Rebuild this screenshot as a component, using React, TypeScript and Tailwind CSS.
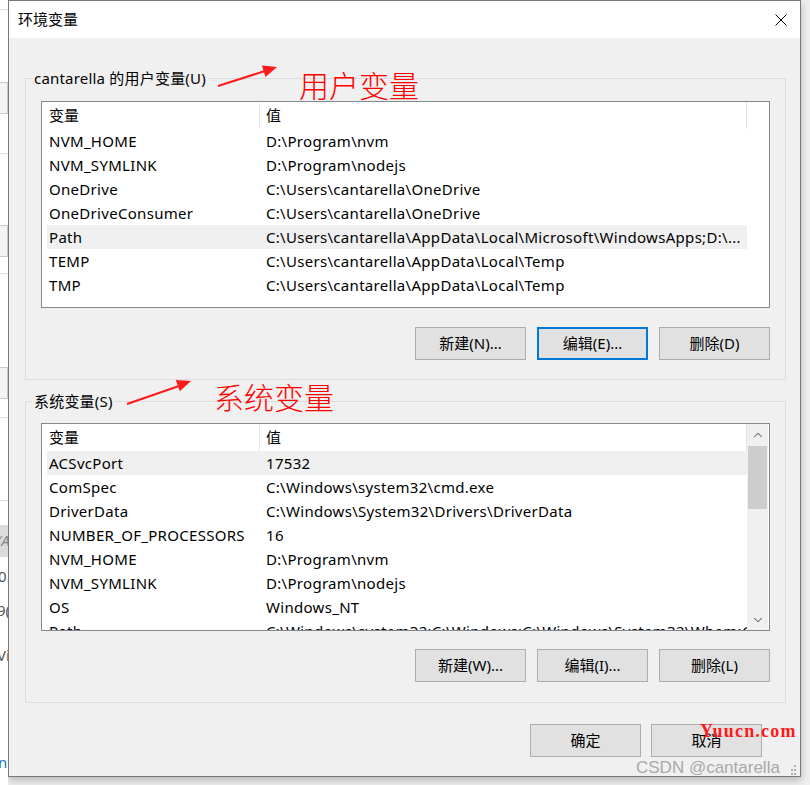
import { ChevronDown, ChevronUp } from 'lucide-react';

type Row = [string, string];

const userVars: Row[] = [
  ['NVM_HOME', 'D:\\Program\\nvm'],
  ['NVM_SYMLINK', 'D:\\Program\\nodejs'],
  ['OneDrive', 'C:\\Users\\cantarella\\OneDrive'],
  ['OneDriveConsumer', 'C:\\Users\\cantarella\\OneDrive'],
  ['Path', 'C:\\Users\\cantarella\\AppData\\Local\\Microsoft\\WindowsApps;D:\\...'],
  ['TEMP', 'C:\\Users\\cantarella\\AppData\\Local\\Temp'],
  ['TMP', 'C:\\Users\\cantarella\\AppData\\Local\\Temp'],
];

const sysVars: Row[] = [
  ['ACSvcPort', '17532'],
  ['ComSpec', 'C:\\Windows\\system32\\cmd.exe'],
  ['DriverData', 'C:\\Windows\\System32\\Drivers\\DriverData'],
  ['NUMBER_OF_PROCESSORS', '16'],
  ['NVM_HOME', 'D:\\Program\\nvm'],
  ['NVM_SYMLINK', 'D:\\Program\\nodejs'],
  ['OS', 'Windows_NT'],
  ['Path', 'C:\\Windows\\system32;C:\\Windows;C:\\Windows\\System32\\Wbem;C:\\Windows\\...'],
];

function VarList({
  rows,
  selected,
  scroll,
  height,
}: {
  rows: Row[];
  selected: number;
  scroll?: boolean;
  height: string;
}) {
  return (
    <div className={`ml-[15px] w-[729px] ${height} border border-[#828790] bg-white flex overflow-hidden`}>
      <div className="pl-[5px] w-[705px] overflow-hidden">
        {/* 헤더 */}
        <div className="h-[27px] w-[700px] flex items-center border-r border-[#e5e5e5]">
          <div className="w-[213px] h-[26px] pl-[2px] flex items-center border-r border-[#e5e5e5]">变量</div>
          <div className="pl-[6px]">值</div>
        </div>
        {rows.map(([name, value], i) => (
          <div
            key={name + i}
            className={`h-[24px] w-[700px] flex items-center tracking-[0.3px] ${i === selected ? 'bg-[#f0f0f0]' : ''}`}
          >
            <div className="w-[219px] pl-[2px] whitespace-nowrap">{name}</div>
            <div className="flex-1 whitespace-nowrap overflow-hidden">{value}</div>
          </div>
        ))}
      </div>
      {scroll && (
        <div className="w-[21px] h-full bg-[#f0f0f0] flex flex-col items-center">
          <div className="h-[21px] w-full flex items-center justify-center text-[#606060]">
            <ChevronUp className="w-[14px] h-[14px]" strokeWidth={1.75} />
          </div>
          <div className="mt-[1px] w-[19px] h-[63px] bg-[#cdcdcd]" />
          <div className="flex-1" />
          <div className="h-[21px] w-full flex items-center justify-center text-[#606060]">
            <ChevronDown className="w-[14px] h-[14px]" strokeWidth={1.75} />
          </div>
        </div>
      )}
    </div>
  );
}

function Btn({ label, focused }: { label: string; focused?: boolean }) {
  return (
    <div
      className={`w-[111px] h-[33px] flex items-center justify-center bg-[#e1e1e1] ${
        focused ? 'border-2 border-[#0078d7]' : 'border border-[#adadad]'
      }`}
    >
      {label}
    </div>
  );
}

function Group({ title, children, gap }: { title: string; children: React.ReactNode; gap: string }) {
  return (
    <fieldset className="ml-[16px] w-[761px] h-[312px] border border-[#dcdcdc]">
      <legend className="ml-[6px] px-[2px] leading-[20px] tracking-[0.2px]">{title}</legend>
      <div className={gap}>{children}</div>
    </fieldset>
  );
}

function LeftStrip() {
  // 뒤 창의 일부
  return (
    <div className="relative w-[8px] h-[785px] bg-white overflow-hidden shrink-0 text-[15px] text-[#555]">
      <div className="absolute left-0 top-[9px] w-full border-t border-[#e0e0e0]" />
      <div className="absolute left-[-4px] top-[82px] w-[12px] h-[32px] border border-[#c8c8c8] bg-[#f4f4f4]" />
      <div className="absolute left-0 top-[153px] w-full border-t border-[#e0e0e0]" />
      <div className="absolute left-[-4px] top-[225px] w-[12px] h-[32px] border border-[#c8c8c8] bg-[#f4f4f4]" />
      <div className="absolute left-0 top-[273px] w-full border-t border-[#e0e0e0]" />
      <div className="absolute left-[-4px] top-[367px] w-[12px] h-[32px] border border-[#c8c8c8] bg-[#f4f4f4]" />
      <div className="absolute left-0 top-[417px] w-full border-t border-[#e0e0e0]" />
      <div className="absolute left-0 top-[500px] w-full border-t border-[#d8d8d8]" />
      <div className="absolute left-0 top-[525px] w-full h-[32px] bg-[#dcdcdc]" />
      <div className="absolute left-[-3px] top-[530px] italic leading-[20px] text-[#888]">(A</div>
      <div className="absolute left-[-2px] top-[566px] leading-[20px]">0</div>
      <div className="absolute left-[-3px] top-[600px] leading-[20px]">9(</div>
      <div className="absolute left-[-3px] top-[645px] leading-[20px]">Vi</div>
      <div className="absolute left-[-2px] top-[752px] leading-[20px] text-[#1a73c8]">n</div>
    </div>
  );
}

export default function App() {
  return (
    <div className="relative w-[810px] h-[785px] overflow-hidden bg-[#efefef] flex items-start font-['Noto_Sans','Noto_Sans_CJK_SC',sans-serif] text-[15px] text-black">
      <LeftStrip />

      <div className="w-[793px] h-[777px] border border-[#787878] bg-[#f0f0f0] flex flex-col shadow-[0_3px_8px_rgba(0,0,0,0.25)]">
        {/* 타이틀바 */}
        <div className="h-[37px] bg-white flex items-center justify-between pl-[9px] pr-[13px]">
          <span>环境变量</span>
          <svg width="12" height="12" viewBox="0 0 12 12">
            <path d="M0.5 0.5 L11.5 11.5 M11.5 0.5 L0.5 11.5" stroke="#000" strokeWidth="1" />
          </svg>
        </div>

        <div className="mt-[30px]">
          <Group title="cantarella 的用户变量(U)" gap="mt-[13px]">
            <VarList rows={userVars} selected={4} height="h-[207px]" />
            <div className="ml-[15px] w-[729px] mt-[19px] flex justify-end gap-[11px]">
              <Btn label="新建(N)..." />
              <Btn label="编辑(E)..." focused />
              <Btn label="删除(D)" />
            </div>
          </Group>
        </div>

        <div className="mt-[11px]">
          <Group title="系统变量(S)" gap="mt-[12px]">
            <VarList rows={sysVars} selected={0} scroll height="h-[208px]" />
            <div className="ml-[15px] w-[729px] mt-[18px] flex justify-end gap-[11px]">
              <Btn label="新建(W)..." />
              <Btn label="编辑(I)..." />
              <Btn label="删除(L)" />
            </div>
          </Group>
        </div>

        <div className="mt-[21px] pr-[38px] flex justify-end gap-[10px]">
          <Btn label="确定" />
          <Btn label="取消" />
        </div>
      </div>

      {/* 빨간 주석 */}
      <svg className="absolute inset-0 pointer-events-none" width="810" height="785">
        <line x1="218" y1="86" x2="265" y2="71" stroke="#ff1a1a" strokeWidth="2" />
        <polygon points="277,67 265.5,77 261.9,65.6" fill="#ff1a1a" />
        <line x1="127" y1="404" x2="179" y2="386" stroke="#ff1a1a" strokeWidth="2" />
        <polygon points="191,381 179.8,391.3 175.8,380.1" fill="#ff1a1a" />
      </svg>
      <div className="absolute left-[299px] top-[69px] text-[30px] leading-[30px] text-[#ff0000] font-['Noto_Sans_CJK_SC',sans-serif] font-light">
        用户变量
      </div>
      <div className="absolute left-[214px] top-[381px] text-[30px] leading-[30px] text-[#ff0000] font-['Noto_Sans_CJK_SC',sans-serif] font-light">
        系统变量
      </div>

      {/* 워터마크 */}
      <div className="absolute left-[700px] top-[722px] text-[18px] leading-[18px] tracking-[1.2px] font-bold text-[#ff1a1a] font-['Liberation_Serif',serif]">
        Yuucn.com
      </div>
      <div className="absolute left-[636px] top-[759px] text-[17px] leading-[17px] text-[#a9a9a9] font-['Liberation_Sans',sans-serif]">
        CSDN @cantarella
      </div>
      <svg className="absolute left-[789px] top-[765px]" width="8" height="10" viewBox="0 0 8 10">
        <rect x="5" y="0" width="2" height="2" fill="#b0b0b0" />
        <rect x="2" y="4" width="2" height="2" fill="#b0b0b0" />
        <rect x="5" y="4" width="2" height="2" fill="#b0b0b0" />
        <rect x="2" y="8" width="2" height="2" fill="#b0b0b0" />
        <rect x="5" y="8" width="2" height="2" fill="#b0b0b0" />
      </svg>
    </div>
  );
}
